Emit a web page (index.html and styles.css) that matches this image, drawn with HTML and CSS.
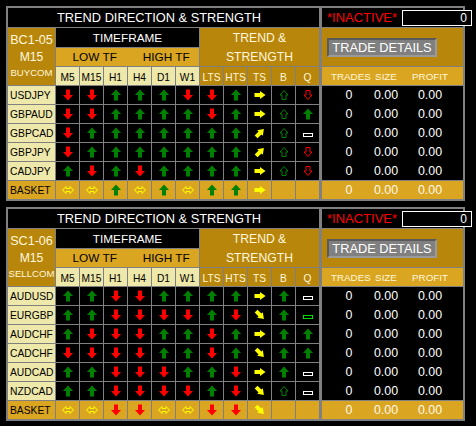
FILE: index.html
```html
<!DOCTYPE html>
<html>
<head>
  <meta charset="utf-8" />
  <title>Trend Direction &amp; Strength</title>
  <link rel="stylesheet" href="styles.css">
</head>
<body>
<svg class="defs" width="0" height="0">
  <!-- solid arrows -->
  <symbol id="u" viewBox="0 0 12 12"><polygon points="6,0.5 11,6 8,6 8,11.5 4,11.5 4,6 1,6" fill="#008000"/></symbol>
  <symbol id="d" viewBox="0 0 12 12"><polygon points="6,11.5 11,6 8,6 8,0.5 4,0.5 4,6 1,6" fill="#ff0000"/></symbol>
  <!-- strength arrows -->
  <symbol id="r" viewBox="0 0 12 12"><polygon points="0.5,4 6,4 6,2 11.5,6 6,10 6,8 0.5,8" fill="#ffff00"/></symbol>
  <symbol id="ur" viewBox="0 0 12 12"><polygon transform="rotate(-45 6 6)" points="0.5,4 6,4 6,2 11.5,6 6,10 6,8 0.5,8" fill="#ffff00"/></symbol>
  <symbol id="dr" viewBox="0 0 12 12"><polygon transform="rotate(45 6 6)" points="0.5,4 6,4 6,2 11.5,6 6,10 6,8 0.5,8" fill="#ffff00"/></symbol>
  <!-- outline arrows -->
  <symbol id="hu" viewBox="0 0 12 12"><polygon points="6,1.5 10,6 8,6 8,10.5 4,10.5 4,6 2,6" fill="none" stroke="#008000"/></symbol>
  <symbol id="hd" viewBox="0 0 12 12"><polygon points="6,10.5 10,6 8,6 8,1.5 4,1.5 4,6 2,6" fill="none" stroke="#ff0000"/></symbol>
  <symbol id="lr" viewBox="0 0 12 12"><polygon points="0.5,6 4,2.5 4,4.5 8,4.5 8,2.5 11.5,6 8,9.5 8,7.5 4,7.5 4,9.5" fill="none" stroke="#ffff00"/></symbol>
  <!-- flat marks -->
  <symbol id="f" viewBox="0 0 12 12"><rect x="1.5" y="6.5" width="9" height="3" fill="#000" stroke="#ffffff"/></symbol>
  <symbol id="fg" viewBox="0 0 12 12"><rect x="1.5" y="6.5" width="9" height="3" fill="#000" stroke="#00e000"/></symbol>
</svg>

<div class="board">

  <!-- BUY basket -->
  <div class="panel">
    <div class="grid">
      <div class="title">TREND DIRECTION &amp; STRENGTH</div>
      <div class="setup">
        <span class="code">BC1-05</span>
        <span class="tfr">M15</span>
        <span class="kind">BUYCOM</span>
      </div>
      <div class="tf">TIMEFRAME</div>
      <div class="strength"><span>TREND &amp;</span><span>STRENGTH</span></div>
      <div class="range"><span>LOW TF</span><span>HIGH TF</span></div>
      <div class="h">M5</div><div class="h">M15</div><div class="h">H1</div><div class="h">H4</div><div class="h">D1</div><div class="h">W1</div>
      <div class="h dk">LTS</div><div class="h dk">HTS</div><div class="h dk">TS</div><div class="h dk">B</div><div class="h dk">Q</div>

      <div class="pair">USDJPY</div>
      <div class="c"><svg><use href="#d"/></svg></div><div class="c"><svg><use href="#d"/></svg></div><div class="c"><svg><use href="#u"/></svg></div><div class="c"><svg><use href="#u"/></svg></div><div class="c"><svg><use href="#u"/></svg></div><div class="c"><svg><use href="#d"/></svg></div>
      <div class="c"><svg><use href="#d"/></svg></div><div class="c"><svg><use href="#u"/></svg></div><div class="c"><svg><use href="#r"/></svg></div><div class="c"><svg><use href="#hu"/></svg></div><div class="c"><svg><use href="#hd"/></svg></div>

      <div class="pair">GBPAUD</div>
      <div class="c"><svg><use href="#d"/></svg></div><div class="c"><svg><use href="#d"/></svg></div><div class="c"><svg><use href="#u"/></svg></div><div class="c"><svg><use href="#u"/></svg></div><div class="c"><svg><use href="#u"/></svg></div><div class="c"><svg><use href="#u"/></svg></div>
      <div class="c"><svg><use href="#d"/></svg></div><div class="c"><svg><use href="#u"/></svg></div><div class="c"><svg><use href="#r"/></svg></div><div class="c"><svg><use href="#hu"/></svg></div><div class="c"><svg><use href="#u"/></svg></div>

      <div class="pair">GBPCAD</div>
      <div class="c"><svg><use href="#d"/></svg></div><div class="c"><svg><use href="#u"/></svg></div><div class="c"><svg><use href="#u"/></svg></div><div class="c"><svg><use href="#u"/></svg></div><div class="c"><svg><use href="#u"/></svg></div><div class="c"><svg><use href="#u"/></svg></div>
      <div class="c"><svg><use href="#u"/></svg></div><div class="c"><svg><use href="#u"/></svg></div><div class="c"><svg><use href="#ur"/></svg></div><div class="c"><svg><use href="#hu"/></svg></div><div class="c"><svg><use href="#f"/></svg></div>

      <div class="pair">GBPJPY</div>
      <div class="c"><svg><use href="#d"/></svg></div><div class="c"><svg><use href="#u"/></svg></div><div class="c"><svg><use href="#u"/></svg></div><div class="c"><svg><use href="#u"/></svg></div><div class="c"><svg><use href="#u"/></svg></div><div class="c"><svg><use href="#u"/></svg></div>
      <div class="c"><svg><use href="#u"/></svg></div><div class="c"><svg><use href="#u"/></svg></div><div class="c"><svg><use href="#ur"/></svg></div><div class="c"><svg><use href="#hu"/></svg></div><div class="c"><svg><use href="#hd"/></svg></div>

      <div class="pair">CADJPY</div>
      <div class="c"><svg><use href="#u"/></svg></div><div class="c"><svg><use href="#d"/></svg></div><div class="c"><svg><use href="#u"/></svg></div><div class="c"><svg><use href="#d"/></svg></div><div class="c"><svg><use href="#u"/></svg></div><div class="c"><svg><use href="#u"/></svg></div>
      <div class="c"><svg><use href="#u"/></svg></div><div class="c"><svg><use href="#u"/></svg></div><div class="c"><svg><use href="#r"/></svg></div><div class="c"><svg><use href="#hu"/></svg></div><div class="c"><svg><use href="#hd"/></svg></div>

      <div class="pair bk">BASKET</div>
      <div class="c bk"><svg><use href="#lr"/></svg></div><div class="c bk"><svg><use href="#lr"/></svg></div><div class="c bk"><svg><use href="#u"/></svg></div><div class="c bk"><svg><use href="#lr"/></svg></div><div class="c bk"><svg><use href="#u"/></svg></div><div class="c bk"><svg><use href="#lr"/></svg></div>
      <div class="c bk"><svg><use href="#u"/></svg></div><div class="c bk"><svg><use href="#u"/></svg></div><div class="c bk"><svg><use href="#r"/></svg></div><div class="c bk"></div><div class="c bk"></div>
    </div>

    <div class="side">
      <div class="status">
        <span class="inactive">*INACTIVE*</span>
        <span class="count">0</span>
      </div>
      <div class="details"><div class="btn">TRADE DETAILS</div></div>
      <div class="cols head"><span>TRADES</span><span>SIZE</span><span>PROFIT</span></div>
      <div class="data">
        <div class="cols"><span>0</span><span>0.00</span><span>0.00</span></div>
        <div class="cols"><span>0</span><span>0.00</span><span>0.00</span></div>
        <div class="cols"><span>0</span><span>0.00</span><span>0.00</span></div>
        <div class="cols"><span>0</span><span>0.00</span><span>0.00</span></div>
        <div class="cols"><span>0</span><span>0.00</span><span>0.00</span></div>
      </div>
      <div class="cols total"><span>0</span><span>0.00</span><span>0.00</span></div>
    </div>
  </div>

  <!-- SELL basket -->
  <div class="panel">
    <div class="grid">
      <div class="title">TREND DIRECTION &amp; STRENGTH</div>
      <div class="setup">
        <span class="code">SC1-06</span>
        <span class="tfr">M15</span>
        <span class="kind">SELLCOM</span>
      </div>
      <div class="tf">TIMEFRAME</div>
      <div class="strength"><span>TREND &amp;</span><span>STRENGTH</span></div>
      <div class="range"><span>LOW TF</span><span>HIGH TF</span></div>
      <div class="h">M5</div><div class="h">M15</div><div class="h">H1</div><div class="h">H4</div><div class="h">D1</div><div class="h">W1</div>
      <div class="h dk">LTS</div><div class="h dk">HTS</div><div class="h dk">TS</div><div class="h dk">B</div><div class="h dk">Q</div>

      <div class="pair">AUDUSD</div>
      <div class="c"><svg><use href="#u"/></svg></div><div class="c"><svg><use href="#u"/></svg></div><div class="c"><svg><use href="#d"/></svg></div><div class="c"><svg><use href="#d"/></svg></div><div class="c"><svg><use href="#u"/></svg></div><div class="c"><svg><use href="#u"/></svg></div>
      <div class="c"><svg><use href="#u"/></svg></div><div class="c"><svg><use href="#u"/></svg></div><div class="c"><svg><use href="#r"/></svg></div><div class="c"><svg><use href="#u"/></svg></div><div class="c"><svg><use href="#f"/></svg></div>

      <div class="pair">EURGBP</div>
      <div class="c"><svg><use href="#u"/></svg></div><div class="c"><svg><use href="#u"/></svg></div><div class="c"><svg><use href="#d"/></svg></div><div class="c"><svg><use href="#d"/></svg></div><div class="c"><svg><use href="#d"/></svg></div><div class="c"><svg><use href="#d"/></svg></div>
      <div class="c"><svg><use href="#u"/></svg></div><div class="c"><svg><use href="#d"/></svg></div><div class="c"><svg><use href="#dr"/></svg></div><div class="c"><svg><use href="#u"/></svg></div><div class="c"><svg><use href="#fg"/></svg></div>

      <div class="pair">AUDCHF</div>
      <div class="c"><svg><use href="#u"/></svg></div><div class="c"><svg><use href="#d"/></svg></div><div class="c"><svg><use href="#d"/></svg></div><div class="c"><svg><use href="#d"/></svg></div><div class="c"><svg><use href="#u"/></svg></div><div class="c"><svg><use href="#u"/></svg></div>
      <div class="c"><svg><use href="#d"/></svg></div><div class="c"><svg><use href="#u"/></svg></div><div class="c"><svg><use href="#r"/></svg></div><div class="c"><svg><use href="#u"/></svg></div><div class="c"><svg><use href="#u"/></svg></div>

      <div class="pair">CADCHF</div>
      <div class="c"><svg><use href="#d"/></svg></div><div class="c"><svg><use href="#d"/></svg></div><div class="c"><svg><use href="#d"/></svg></div><div class="c"><svg><use href="#d"/></svg></div><div class="c"><svg><use href="#u"/></svg></div><div class="c"><svg><use href="#u"/></svg></div>
      <div class="c"><svg><use href="#d"/></svg></div><div class="c"><svg><use href="#u"/></svg></div><div class="c"><svg><use href="#dr"/></svg></div><div class="c"><svg><use href="#u"/></svg></div><div class="c"><svg><use href="#u"/></svg></div>

      <div class="pair">AUDCAD</div>
      <div class="c"><svg><use href="#u"/></svg></div><div class="c"><svg><use href="#u"/></svg></div><div class="c"><svg><use href="#d"/></svg></div><div class="c"><svg><use href="#d"/></svg></div><div class="c"><svg><use href="#d"/></svg></div><div class="c"><svg><use href="#u"/></svg></div>
      <div class="c"><svg><use href="#u"/></svg></div><div class="c"><svg><use href="#d"/></svg></div><div class="c"><svg><use href="#r"/></svg></div><div class="c"><svg><use href="#u"/></svg></div><div class="c"><svg><use href="#f"/></svg></div>

      <div class="pair">NZDCAD</div>
      <div class="c"><svg><use href="#u"/></svg></div><div class="c"><svg><use href="#u"/></svg></div><div class="c"><svg><use href="#d"/></svg></div><div class="c"><svg><use href="#d"/></svg></div><div class="c"><svg><use href="#d"/></svg></div><div class="c"><svg><use href="#d"/></svg></div>
      <div class="c"><svg><use href="#u"/></svg></div><div class="c"><svg><use href="#d"/></svg></div><div class="c"><svg><use href="#dr"/></svg></div><div class="c"><svg><use href="#hu"/></svg></div><div class="c"><svg><use href="#f"/></svg></div>

      <div class="pair bk">BASKET</div>
      <div class="c bk"><svg><use href="#lr"/></svg></div><div class="c bk"><svg><use href="#lr"/></svg></div><div class="c bk"><svg><use href="#d"/></svg></div><div class="c bk"><svg><use href="#d"/></svg></div><div class="c bk"><svg><use href="#lr"/></svg></div><div class="c bk"><svg><use href="#lr"/></svg></div>
      <div class="c bk"><svg><use href="#d"/></svg></div><div class="c bk"><svg><use href="#d"/></svg></div><div class="c bk"><svg><use href="#dr"/></svg></div><div class="c bk"></div><div class="c bk"></div>
    </div>

    <div class="side">
      <div class="status">
        <span class="inactive">*INACTIVE*</span>
        <span class="count">0</span>
      </div>
      <div class="details"><div class="btn">TRADE DETAILS</div></div>
      <div class="cols head"><span>TRADES</span><span>SIZE</span><span>PROFIT</span></div>
      <div class="data">
        <div class="cols"><span>0</span><span>0.00</span><span>0.00</span></div>
        <div class="cols"><span>0</span><span>0.00</span><span>0.00</span></div>
        <div class="cols"><span>0</span><span>0.00</span><span>0.00</span></div>
        <div class="cols"><span>0</span><span>0.00</span><span>0.00</span></div>
        <div class="cols"><span>0</span><span>0.00</span><span>0.00</span></div>
        <div class="cols"><span>0</span><span>0.00</span><span>0.00</span></div>
      </div>
      <div class="cols total"><span>0</span><span>0.00</span><span>0.00</span></div>
    </div>
  </div>

</div>
</body>
</html>
```

FILE: styles.css
```css
body {
  margin: 0;
  padding: 6px 0 0 6px;
  background: #000;
  font-family: "Liberation Sans", Arial, sans-serif;
}
.defs {
  position: absolute;
  width: 0;
  height: 0;
}
.board {
  display: flex;
  flex-direction: column;
  align-items: flex-start;
  gap: 6px;
}
.panel {
  display: flex;
  gap: 3px;
  padding: 2px;
  background: #808080;
}

/* left table: pair column + 11 signal columns */
.grid {
  display: grid;
  grid-template-columns: 47px repeat(11, 23px);
  grid-template-rows: 19px 19px 18px 18px;
  grid-auto-rows: 18px;
  gap: 1px;
}
.grid > div {
  display: flex;
  align-items: center;
  justify-content: center;
  background: #000;
}
.grid .title {
  grid-column: 1 / -1;
  justify-content: flex-start;
  padding-left: 49px;
  color: #fff;
  font-size: 12.8px;
}
.grid .setup {
  grid-row: 2 / span 3;
  flex-direction: column;
  justify-content: flex-start;
  padding-top: 4px;
  background: #b8860b;
  color: #fff8dc;
}
.setup .code { font-size: 12.6px; line-height: 17px; }
.setup .tfr { font-size: 12.2px; line-height: 16px; }
.setup .kind { font-size: 9.6px; line-height: 16px; }
.grid .tf {
  grid-column: 2 / span 6;
  color: #fff;
  font-size: 11.8px;
}
.grid .strength {
  grid-column: 8 / span 5;
  grid-row: 2 / span 2;
  flex-direction: column;
  padding-top: 1px;
  background: #b8860b;
  color: #fff8dc;
  font-size: 12.2px;
  line-height: 19px;
}
.grid .range {
  grid-column: 2 / span 6;
  background: #daa520;
  color: #000;
  font-size: 11.8px;
}
.range span {
  width: 72px;
  padding-left: 6px;
  text-align: center;
}
.grid .h {
  background: #eee8aa;
  color: #000;
  font-size: 10.2px;
  padding-top: 2px;
}
.grid .h.dk {
  background: #b8860b;
  color: #fff8dc;
}
.grid .pair {
  justify-content: flex-start;
  padding-left: 2px;
  background: #eee8aa;
  color: #000;
  font-size: 10.3px;
  white-space: nowrap;
  overflow: hidden;
}
.grid .bk {
  background: #daa520;
}
.c svg {
  width: 12px;
  height: 12px;
}

/* right block: status, button, totals */
.side {
  width: 141px;
  display: flex;
  flex-direction: column;
  gap: 1px;
}
.status {
  height: 19px;
  display: flex;
  align-items: center;
  background: #000;
}
.inactive {
  flex-shrink: 0;
  width: 75px;
  margin-left: 5px;
  color: #ff0000;
  font-size: 13px;
}
.count {
  flex-shrink: 0;
  box-sizing: border-box;
  width: 70px;
  height: 16px;
  padding-right: 4px;
  border: 1px solid #fff;
  background: #000;
  color: #fff;
  font-size: 12px;
  line-height: 14px;
  text-align: right;
}
.details {
  box-sizing: border-box;
  height: 38px;
  padding: 10px 0 0 5px;
  background: #b8860b;
}
.btn {
  box-sizing: border-box;
  width: 110px;
  height: 19px;
  display: flex;
  align-items: center;
  justify-content: center;
  border: 2px solid;
  border-color: #5a5a5a #9a9a9a #9a9a9a #5a5a5a;
  background: #808080;
  color: #fff;
  font-size: 12.8px;
}
.cols {
  height: 18px;
  display: grid;
  grid-template-columns: 45px 41px 55px;
  align-items: center;
  color: #fff;
  font-size: 12.4px;
}
.cols span {
  text-align: center;
}
.cols span:nth-child(1) { padding-left: 9px; }
.cols span:nth-child(2) { padding-right: 3px; }
.cols span:nth-child(3) { padding-right: 11px; }
.cols.head {
  background: #daa520;
  color: #fff8dc;
  font-size: 9.8px;
  padding-top: 1px;
  box-sizing: border-box;
}
.data {
  display: flex;
  flex-direction: column;
  gap: 1px;
  background: #000;
}
.cols.total {
  background: #daa520;
  color: #fffaf0;
}
```
